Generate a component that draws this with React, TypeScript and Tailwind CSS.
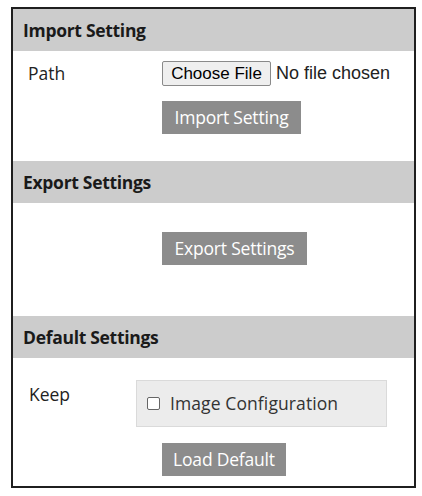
import React from "react";

const seg = { fontFamily: '"Open Sans", "Noto Sans", sans-serif' };
const arial = { fontFamily: '"Liberation Sans", Arial, sans-serif' };

function Header({ title }: { title: string }) {
  return (
    <div className="h-[42px] bg-[#cccccc] flex items-center pl-[10px]">
      <span className="text-[17.5px] font-bold text-[#1a1a1a] tracking-[-0.3px]" style={seg}>
        {title}
      </span>
    </div>
  );
}

function GrayButton({ label, w }: { label: string; w: string }) {
  return (
    <div
      className={`h-[33px] ${w} bg-[#8c8c8c] text-white text-[17.5px] flex items-center justify-center tracking-[-0.2px]`}
      style={seg}
    >
      {label}
    </div>
  );
}

export default function App() {
  return (
    <div className="w-[422px] h-[496px] bg-white pt-[7px] pl-[11px]">
      <div className="w-[405px] h-[481px] border-2 border-[#1f1f1f] flex flex-col">
        <Header title="Import Setting" />
        <div className="h-[110px] flex flex-col">
          <div className="flex items-center mt-[10px] h-[25px]">
            <span className="w-[149px] pl-[15px] text-[17.5px] text-[#222]" style={seg}>
              Path
            </span>
            <div className="h-[25px] w-[109px] bg-[#efefef] border border-[#8a8a8a] rounded-[2px] text-[17px] text-black flex items-center justify-center" style={arial}>
              Choose File
            </div>
            <span className="ml-[5px] text-[18px] text-[#222]" style={arial}>
              No file chosen
            </span>
          </div>
          <div className="mt-[15px] ml-[149px]">
            <GrayButton label="Import Setting" w="w-[139px]" />
          </div>
        </div>
        <Header title="Export Settings" />
        <div className="h-[113px]">
          <div className="mt-[29px] ml-[149px]">
            <GrayButton label="Export Settings" w="w-[145px]" />
          </div>
        </div>
        <Header title="Default Settings" />
        <div className="flex-1 flex flex-col">
          <div className="flex mt-[22px]">
            <span className="w-[123px] pl-[16px] text-[17.5px] text-[#222] mt-[1px]" style={seg}>
              Keep
            </span>
            <div className="w-[251px] h-[47px] bg-[#ececec] border border-[#dadada] flex items-center pl-[10px]">
              <span className="w-[13px] h-[13px] border border-[#666] rounded-[2px] bg-white" />
              <span className="ml-[10px] text-[17.5px] text-[#333] tracking-[0.1px]" style={seg}>
                Image Configuration
              </span>
            </div>
          </div>
          <div className="mt-[16px] ml-[149px]">
            <GrayButton label="Load Default" w="w-[124px]" />
          </div>
        </div>
      </div>
    </div>
  );
}
